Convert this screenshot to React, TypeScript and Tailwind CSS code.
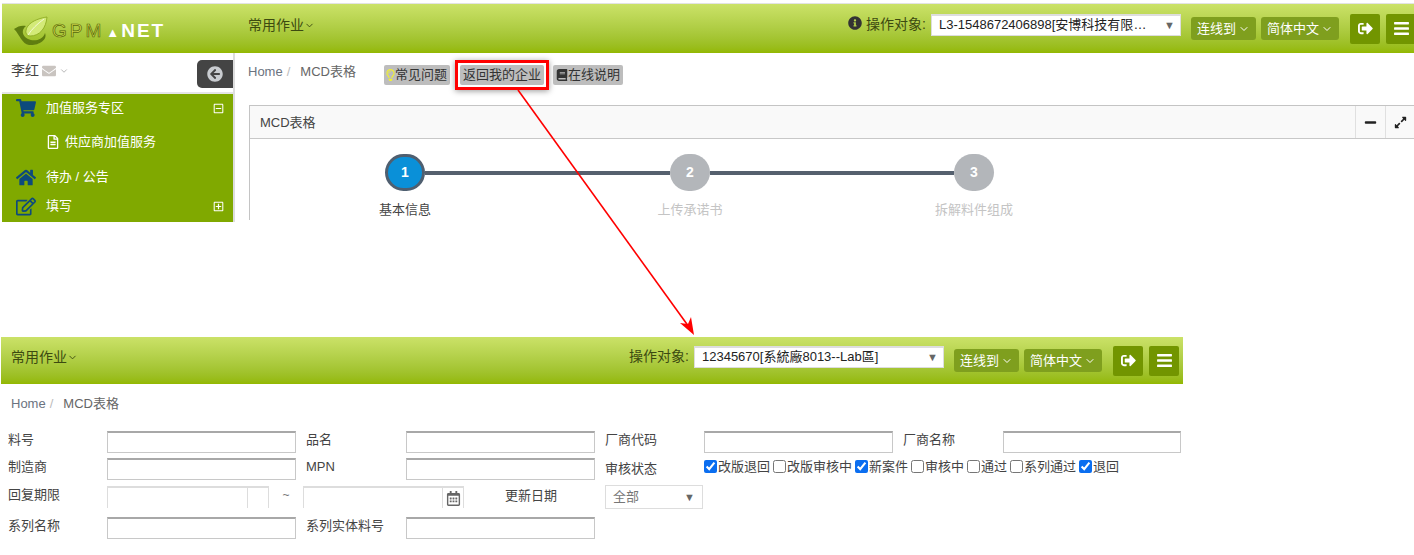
import React from "react";
import { ChevronDown } from "lucide-react";
import {
  FaArrowCircleLeft,
  FaBars,
  FaBook,
  FaEnvelope,
  FaExpandAlt,
  FaHome,
  FaInfoCircle,
  FaMinus,
  FaRegCalendarAlt,
  FaRegEdit,
  FaRegFileAlt,
  FaRegLightbulb,
  FaRegMinusSquare,
  FaRegPlusSquare,
  FaShoppingCart,
  FaSignOutAlt,
} from "react-icons/fa";

const font = "font-['Liberation_Sans','Noto_Sans_CJK_SC',sans-serif]";

const Logo = () => (
  <div className="flex items-center w-[246px] pl-[11px] shrink-0">
    <svg width="35" height="30" viewBox="13 14 35 30" className="shrink-0 mt-[4px]">
      <path d="M14 27 C18 24 22 23 26 24 C21 28 22 34 28 37 C34 40 43 38 45 31 C48 38 38 44 29 43 C22 42 20 33 14 27Z" fill="#5f7d10" />
      <path d="M26 31 C25 23 34 17 47 15 C46 26 40 34 30 34 C28 34 27 33 26 31Z" fill="#d3ea78" stroke="#86a51a" strokeWidth="0.8" />
      <path d="M28 33 C32 27 37 22 44 17" stroke="#f4f8d8" strokeWidth="1" fill="none" />
    </svg>
    <span className="ml-[4px] mt-[4px] text-[19px] leading-none tracking-[3px] text-[#d6e04a] [-webkit-text-stroke:0.7px_#55660a] font-['Liberation_Sans',sans-serif]">GPM</span>
    <span className="ml-[2px] mr-[2px] mt-[7px] text-[13px] leading-none text-white">▲</span>
    <span className="mt-[4px] text-[19px] leading-none tracking-[2px] font-bold text-white font-['Liberation_Sans',sans-serif]">NET</span>
  </div>
);

const DarkButton = ({ label }: { label: string }) => (
  <button className="h-[23px] px-[6px] flex items-center gap-[2px] rounded-[3px] bg-[#7f9f1e] text-white text-[13px]">
    {label}
    <ChevronDown size={12} />
  </button>
);

const SquareButton = ({ children }: { children: React.ReactNode }) => (
  <button className="w-[30px] h-[30px] flex items-center justify-center rounded-[2px] bg-[#729500] text-white text-[15px]">
    {children}
  </button>
);

const TopBar = ({
  target,
  showInfo,
  left,
  className,
}: {
  target: string;
  showInfo?: boolean;
  left: React.ReactNode;
  className: string;
}) => (
  <div className={`flex items-center bg-gradient-to-b from-[#cbe268] to-[#93b800] ${className}`}>
    {left}
    <div className="flex items-center text-[14px] text-[#3c4a10] mb-[6px]">
      常用作业
      <ChevronDown size={11} />
    </div>
    <div className="ml-auto flex items-center">
      {showInfo && <FaInfoCircle className="text-[#333] text-[14px] mr-[4px] mb-[11px]" />}
      <span className="text-[14px] text-[#3c4a10] mr-[5px] mb-[8px]">操作对象:</span>
      <div className="w-[250px] h-[22px] mb-[8px] pl-[7px] pr-[5px] flex items-center bg-white border border-t-2 border-[#ddd] text-[13px] text-[#222]">
        <span className="w-[216px] shrink-0 truncate">{target}</span>
        <span className="text-[11px] text-[#666] ml-auto">▼</span>
      </div>
      <div className="flex gap-[5px] ml-[10px] mr-[11px]">
        <DarkButton label="连线到" />
        <DarkButton label="简体中文" />
      </div>
      <div className="flex gap-[6px]">
        <SquareButton>
          <FaSignOutAlt />
        </SquareButton>
        <SquareButton>
          <FaBars className="text-[17px]" />
        </SquareButton>
      </div>
    </div>
  </div>
);

const Sidebar = () => (
  <aside className="w-[231px] shrink-0">
    <div className="h-[41px] flex items-start justify-between border-b-2 border-[#e5e5e5]">
      <div className="flex items-center gap-[3px] pl-[9px] pt-[7px] text-[14px] text-[#444]">
        李红
        <FaEnvelope className="text-[#c9c4c0] text-[14px]" />
        <ChevronDown size={10} className="text-[#aaa]" />
      </div>
      <button className="w-[36px] h-[28px] mt-[7px] flex items-center justify-center rounded-l-[5px] bg-[#444] text-[#c9ccd0] text-[16px]">
        <FaArrowCircleLeft />
      </button>
    </div>
    <nav className="h-[128px] bg-[#80a900] text-[13px] text-white">
      <div className="h-[28px] flex items-center pl-[14px] pr-[9px]">
        <FaShoppingCart className="text-[#0d4a7c] text-[18px] w-[20px]" />
        <span className="ml-[10px]">加值服务专区</span>
        <FaRegMinusSquare className="ml-auto text-[11px]" />
      </div>
      <div className="h-[40px] flex items-center pl-[44px]">
        <FaRegFileAlt className="text-[14px] mr-[5px]" />
        供应商加值服务
      </div>
      <div className="h-[30px] flex items-center pl-[14px]">
        <FaHome className="text-[#0d4a7c] text-[19px] w-[20px]" />
        <span className="ml-[10px]">待办 / 公告</span>
      </div>
      <div className="h-[28px] flex items-center pl-[14px] pr-[9px]">
        <FaRegEdit className="text-[#0d4a7c] text-[19px] w-[20px]" />
        <span className="ml-[10px]">填写</span>
        <FaRegPlusSquare className="ml-auto text-[11px]" />
      </div>
    </nav>
  </aside>
);

const ToolChip = ({ icon, label, className }: { icon?: React.ReactNode; label: string; className?: string }) => (
  <span className={`h-[20px] flex items-center px-[3px] rounded-[2px] bg-[#bdbdbd] text-[13px] text-[#333] ${className ?? ""}`}>
    {icon}
    {label}
  </span>
);

const Step = ({ n, label, active }: { n: number; label: string; active?: boolean }) => (
  <div className="w-[100px] flex flex-col items-center shrink-0 relative z-10">
    <div
      className={
        active
          ? "w-[40px] h-[37px] rounded-full border-[3px] border-[#4f5f70] bg-[#0a90d8] flex items-center justify-center text-white font-bold text-[14px]"
          : "w-[40px] h-[37px] rounded-full bg-[#b3b6ba] flex items-center justify-center text-white font-bold text-[14px]"
      }
    >
      {n}
    </div>
    <span className={`mt-[9px] text-[13px] whitespace-nowrap ${active ? "text-[#444]" : "text-[#c4c4c4]"}`}>{label}</span>
  </div>
);

const Stepper = () => (
  <div className="flex items-start pl-[105px] pt-[15px]">
    <Step n={1} label="基本信息" active />
    <div className="w-[185px] h-[4px] mt-[17px] bg-[#55606e] mx-[-30px] px-[30px] box-content" />
    <Step n={2} label="上传承诺书" />
    <div className="w-[184px] h-[4px] mt-[17px] bg-[#55606e] mx-[-30px] px-[30px] box-content" />
    <Step n={3} label="拆解料件组成" />
  </div>
);

const Card = () => (
  <div className="ml-[14px] border-t border-l border-[#c4c4c4]">
    <div className="h-[33px] flex items-center justify-between pl-[10px] bg-[#f9f9f9] border-b border-[#c8c8c8] text-[13px] text-[#444]">
      <span className="mt-[2px]">MCD表格</span>
      <div className="flex h-full">
        <span className="w-[30px] flex items-center justify-center border-l border-[#e0e0e0] text-[#222] text-[13px]">
          <FaMinus />
        </span>
        <span className="w-[29px] flex items-center justify-center border-l border-[#e0e0e0] text-[#222] text-[13px]">
          <FaExpandAlt />
        </span>
      </div>
    </div>
    <Stepper />
  </div>
);

const Main = () => (
  <main className="flex-1 min-w-0 border-l-2 border-[#ddd]">
    <div className="flex items-start pl-[13px] pt-[7px] h-[52px]">
      <span className="w-[136px] mt-[2px] text-[13px] text-[#6b7380] flex gap-[4px]">
        Home<span className="text-[#bbb] mr-[6px]">/</span><span className="text-[#666]">MCD表格</span>
      </span>
      <div className="flex items-start gap-[5px]">
        <ToolChip icon={<FaRegLightbulb className="w-[9px] text-[#f2f230] text-[12px]" />} label="常见问题" className="mt-[5px] pl-[2px]" />
        <div className="py-[2px] px-[2px] border-[3px] border-[#f00] shadow-[0_1px_6px_rgba(0,0,0,0.4)]">
          <ToolChip label="返回我的企业" />
        </div>
        <ToolChip icon={<FaBook className="w-[12px] text-[#333] text-[12px]" />} label="在线说明" className="mt-[5px] -ml-px" />
      </div>
    </div>
    <Card />
  </main>
);

const Input = ({ className }: { className?: string }) => (
  <input className={`h-[22px] border border-t-2 border-[#c8c8c8] border-t-[#a8a8a8] bg-white ${className ?? "w-[189px]"}`} />
);

const Label = ({ children, className }: { children: React.ReactNode; className?: string }) => (
  <span className={`text-[13px] text-[#444] whitespace-nowrap ${className ?? ""}`}>{children}</span>
);

const statuses: [string, boolean][] = [
  ["改版退回", true],
  ["改版审核中", false],
  ["新案件", true],
  ["审核中", false],
  ["通过", false],
  ["系列通过", false],
  ["退回", true],
];

const DateBox = ({ icon, width }: { icon?: boolean; width: string }) => (
  <div className={`h-[22px] flex justify-end border-x border-t-2 border-[#ddd] ${width}`}>
    <div className="w-[21px] h-full border-l border-[#ddd] flex items-center justify-center text-[#666] text-[15px]">
      {icon && <FaRegCalendarAlt />}
    </div>
  </div>
);

const SearchForm = () => (
  <div className="pl-[8px] pt-[11px] grid grid-cols-[99px_189px_10px_100px_189px_10px_99px_189px_10px_100px_178px] items-center">
    <Label className="-translate-y-[2px]">料号</Label>
    <Input />
    <span />
    <Label className="-translate-y-[2px]">品名</Label>
    <Input />
    <span />
    <Label className="-translate-y-[2px]">厂商代码</Label>
    <Input />
    <span />
    <Label className="-translate-y-[2px]">厂商名称</Label>
    <Input className="w-[178px]" />

    <Label className="mt-[5px] -translate-y-[2px]">制造商</Label>
    <Input className="w-[189px] mt-[5px]" />
    <span />
    <Label className="mt-[5px] -translate-y-[2px]">MPN</Label>
    <Input className="w-[189px] mt-[5px]" />
    <span />
    <Label className="mt-[5px]">审核状态</Label>
    <div className="col-span-4 flex items-start mt-[5px] pt-px h-[22px]">
      {statuses.map(([label, checked]) => (
        <label key={label} className="flex items-center mr-[3px] text-[13px] leading-[15px] text-[#444] whitespace-nowrap">
          <input type="checkbox" defaultChecked={checked} className="w-[13px] h-[13px] m-0 accent-[#0b6ef0]" />
          <span className="ml-px">{label}</span>
        </label>
      ))}
    </div>

    <Label className="mt-[5px] self-start">回复期限</Label>
    <div className="col-span-4 flex items-start mt-[5px]">
      <DateBox width="w-[162px]" />
      <span className="w-[34px] text-center text-[#777] text-[12px]">~</span>
      <DateBox width="w-[161px]" icon />
      <span className="ml-[41px] text-[13px] text-[#444] whitespace-nowrap">更新日期</span>
    </div>
    <span />
    <div className="col-span-5 mt-[5px] self-start">
      <div className="w-[98px] h-[24px] border border-[#ddd] flex items-center justify-between px-[7px] text-[13px] text-[#777]">
        全部
        <span className="text-[11px] text-[#666]">▼</span>
      </div>
    </div>

    <Label className="mt-[8px] -translate-y-[2px]">系列名称</Label>
    <Input className="w-[189px] mt-[8px]" />
    <span />
    <Label className="mt-[8px] -translate-y-[2px]">系列实体料号</Label>
    <Input className="w-[189px] mt-[8px]" />
  </div>
);

const Arrow = () => (
  <svg className="absolute left-0 top-0 pointer-events-none z-20" width="1414" height="555">
    <line x1="518" y1="90" x2="689" y2="327" stroke="#f00" strokeWidth="1.6" />
    <polygon points="694,335 680,323 688,324 691,317" fill="#f00" />
  </svg>
);

export default function App() {
  return (
    <div className={`relative w-[1414px] h-[555px] overflow-hidden bg-white ${font}`}>
      <section className="ml-[2px] mt-[3px] h-[219px] overflow-hidden">
        <TopBar
          target="L3-1548672406898[安博科技有限公司]"
          showInfo
          left={<Logo />}
          className="w-[1414px] h-[50px] border-t border-[#e3e3e3]"
        />
        <div className="flex">
          <Sidebar />
          <Main />
        </div>
      </section>
      <section className="ml-[1px] mt-[115px] w-[1182px]">
        <TopBar target="12345670[系統廠8013--Lab區]" left={<span className="w-[10px]" />} className="h-[47px] pr-[4px]" />
        <div className="pl-[10px] pt-[10px] h-[36px] text-[13px] text-[#6b7380] flex gap-[4px]">
          Home<span className="text-[#bbb] mr-[6px]">/</span>
          <span className="text-[#666]">MCD表格</span>
        </div>
      </section>
      <SearchForm />
      <Arrow />
    </div>
  );
}
